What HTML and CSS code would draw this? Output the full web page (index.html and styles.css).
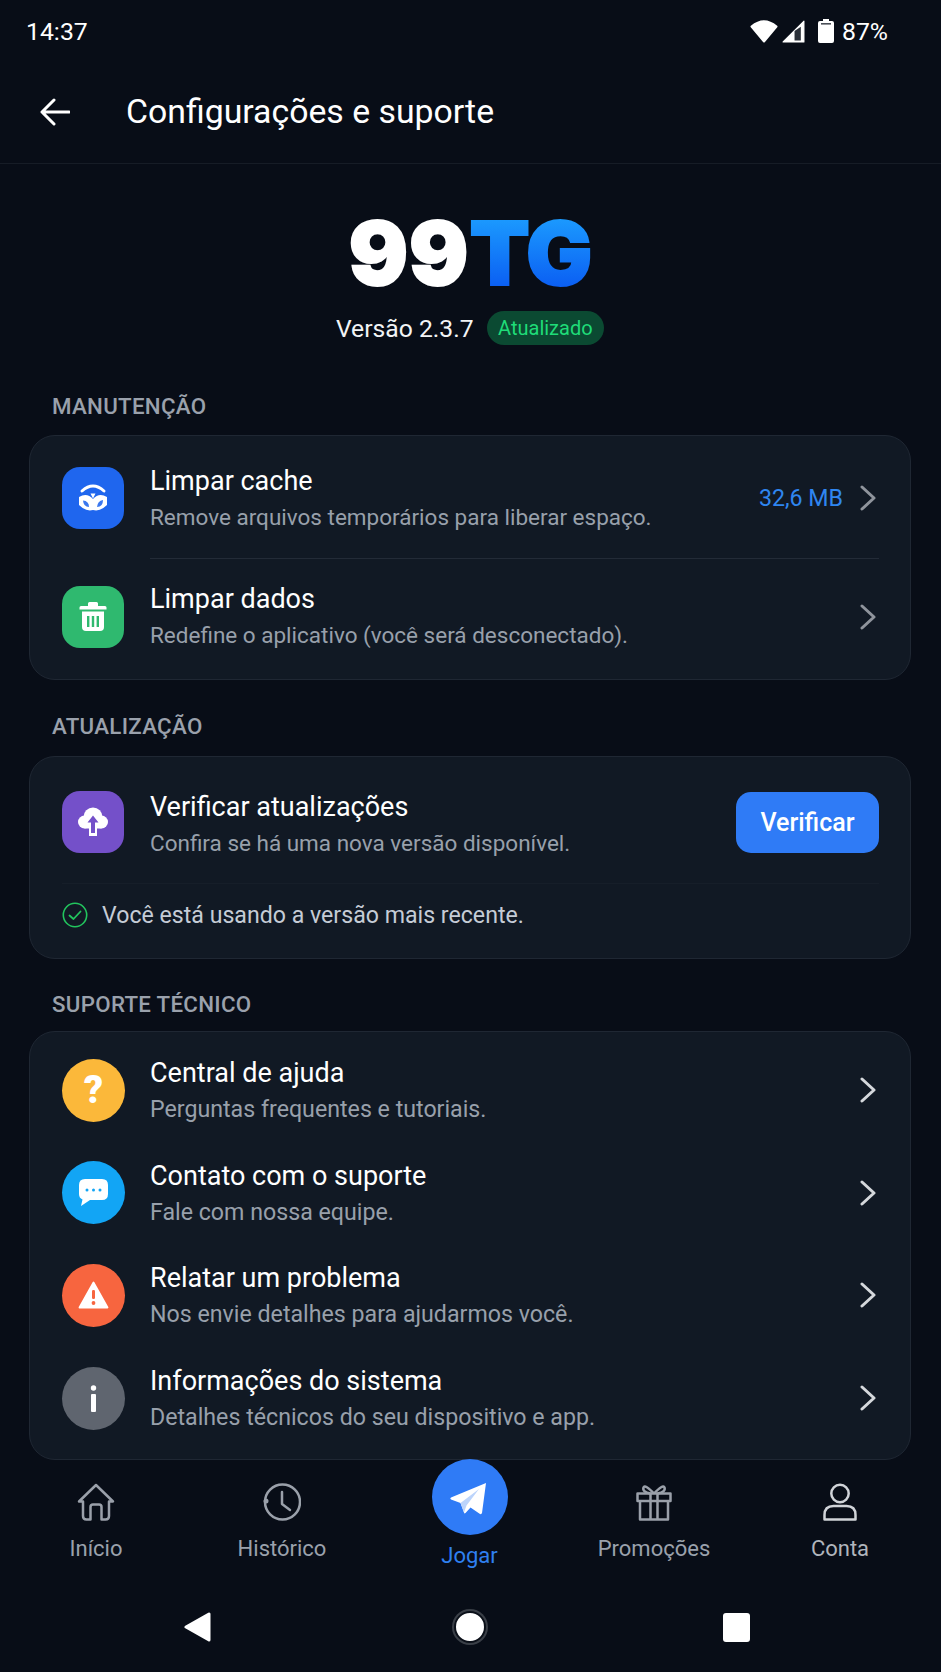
FILE: index.html
```html
<!DOCTYPE html>
<html lang="pt-BR">
<head>
<meta charset="utf-8">
<title>Configurações e suporte</title>
<link rel="stylesheet" href="styles.css">
</head>
<body>
<div class="screen">
  <div class="status">
    <span>14:37</span>
    <div class="status-right">
      <svg class="s-wifi" viewBox="0 0 28 24"><path d="M1.500 7.500Q14-3 26.500 7.500L14 22.500Z" fill="#fff" stroke="#fff" stroke-width="2" stroke-linejoin="round"/></svg>
      <svg class="s-signal" viewBox="0 0 22 22"><path d="M21 1V21H1Z" fill="#fff" stroke="#fff" stroke-linejoin="round"/><path d="M12 19.500V10.500L18 6.500V19.500Z" fill="#2a2f38"/></svg>
      <svg class="s-batt" viewBox="0 0 16 24"><path d="M5 0H11V2H14Q16 2 16 4V22Q16 24 14 24H2Q0 24 0 22V4Q0 2 2 2H5Z" fill="#fff"/><rect x="3" y="4" width="10" height="1.600" fill="#4a4f57"/></svg>
      <span>87%</span>
    </div>
  </div>

  <header class="topbar">
    <svg class="back" viewBox="0 0 30 28"><path d="M29 14H2M14 2 2 14 14 26" fill="none" stroke="#fff" stroke-width="3" stroke-linecap="round" stroke-linejoin="round"/></svg>
    <h1>Configurações e suporte</h1>
  </header>

  <main class="content">
    <div class="brand">
      <div class="logo"><span class="logo-w">99</span><span class="logo-b">TG</span></div>
      <div class="version"><span>Versão 2.3.7</span><span class="badge">Atualizado</span></div>
    </div>

    <h2 class="section section-m">MANUTENÇÃO</h2>
    <section class="card card-a">
      <div class="row row-first">
        <div class="ico sq blue">
          <svg viewBox="0 0 62 62"><path d="M20 24Q31 14 42 24" fill="none" stroke="#fff" stroke-width="3" stroke-linecap="round"/><path d="M17 30Q25 25 31 32Q37 25 45 30V38Q38 45 31 43Q24 45 17 38Z" fill="#fff"/><path d="M28.500 26.500H33.500L31 31.500Z" fill="#fff"/><path d="M21 33.500Q27 34 27 40Q21.500 40 21 33.500ZM41 33Q35.500 34 35 40Q41 40 41 33Z" fill="#3b78ef"/></svg>
        </div>
        <div class="text"><div class="t">Limpar cache</div><div class="d">Remove arquivos temporários para liberar espaço.</div></div>
        <span class="size">32,6 MB</span>
        <svg class="chev" viewBox="0 0 16 26"><path d="M2 2 14 13 2 24" fill="none" stroke="#8f949c" stroke-width="3" stroke-linecap="round" stroke-linejoin="round"/></svg>
      </div>
      <div class="rule"></div>
      <div class="row row-second">
        <div class="ico sq green">
          <svg viewBox="0 0 62 62"><path d="M26 20V17.500Q26 16 27.500 16H34.500Q36 16 36 17.500V20H43Q44.500 20 44.500 21.500V23.500H17.500V21.500Q17.500 20 19 20Z" fill="#fff"/><path d="M20 25.500H42V41Q42 45 38 45H24Q20 45 20 41Z" fill="#fff"/><path d="M25 30H27.400V41H25ZM29.800 30H32.200V41H29.800ZM34.600 30H37V41H34.600Z" fill="#2fb96f"/></svg>
        </div>
        <div class="text"><div class="t">Limpar dados</div><div class="d">Redefine o aplicativo (você será desconectado).</div></div>
        <svg class="chev" viewBox="0 0 16 26"><path d="M2 2 14 13 2 24" fill="none" stroke="#8f949c" stroke-width="3" stroke-linecap="round" stroke-linejoin="round"/></svg>
      </div>
    </section>

    <h2 class="section section-a">ATUALIZAÇÃO</h2>
    <section class="card card-b">
      <div class="row row-update">
        <div class="ico sq purple">
          <svg viewBox="0 0 62 62"><circle cx="31" cy="26" r="9.500" fill="#fff"/><circle cx="22.500" cy="31" r="6.500" fill="#fff"/><circle cx="39.500" cy="31" r="6.500" fill="#fff"/><rect x="22.500" y="28" width="17" height="9.500" fill="#fff"/><rect x="27" y="36" width="8" height="9" fill="#fff"/><path d="M31 24.500 36.500 31.500H33V42H29V31.500H25.500Z" fill="#7450c9"/></svg>
        </div>
        <div class="text"><div class="t">Verificar atualizações</div><div class="d">Confira se há uma nova versão disponível.</div></div>
        <button class="btn">Verificar</button>
      </div>
      <div class="latest">
        <svg class="ok" viewBox="0 0 26 26"><circle cx="13" cy="13" r="11.700" fill="none" stroke="#22c55e" stroke-width="1.600"/><path d="M7.500 13.500 11.500 17 18.500 9.500" fill="none" stroke="#22c55e" stroke-width="1.800" stroke-linecap="round" stroke-linejoin="round"/></svg>
        <span>Você está usando a versão mais recente.</span>
      </div>
    </section>

    <h2 class="section section-s">SUPORTE TÉCNICO</h2>
    <section class="card card-c">
      <div class="row row-sup">
        <div class="ico rd yellow"><span class="q">?</span></div>
        <div class="text"><div class="t">Central de ajuda</div><div class="d">Perguntas frequentes e tutoriais.</div></div>
        <svg class="chev" viewBox="0 0 16 26"><path d="M2 2 14 13 2 24" fill="none" stroke="#d5d8dc" stroke-width="3" stroke-linecap="round" stroke-linejoin="round"/></svg>
      </div>
      <div class="row row-sup">
        <div class="ico rd sky">
          <svg viewBox="0 0 63 63"><path d="M23 18H40Q46 18 46 24V33Q46 39 40 39H28L19 45 20.500 38.500Q17 37 17 33V24Q17 18 23 18Z" fill="#fff"/><circle cx="25" cy="29" r="1.500" fill="#12a5f5"/><circle cx="31.500" cy="29" r="1.500" fill="#12a5f5"/><circle cx="38" cy="29" r="1.500" fill="#12a5f5"/></svg>
        </div>
        <div class="text"><div class="t">Contato com o suporte</div><div class="d">Fale com nossa equipe.</div></div>
        <svg class="chev" viewBox="0 0 16 26"><path d="M2 2 14 13 2 24" fill="none" stroke="#d5d8dc" stroke-width="3" stroke-linecap="round" stroke-linejoin="round"/></svg>
      </div>
      <div class="row row-sup">
        <div class="ico rd orange">
          <svg viewBox="0 0 63 63"><path d="M31.500 18.500 45.500 43.500H17.500Z" fill="#fff" stroke="#fff" stroke-width="1.800" stroke-linejoin="round"/><rect x="30" y="26" width="3" height="9" rx="1.200" fill="#f7653f"/><circle cx="31.500" cy="39" r="1.900" fill="#f7653f"/></svg>
        </div>
        <div class="text"><div class="t">Relatar um problema</div><div class="d">Nos envie detalhes para ajudarmos você.</div></div>
        <svg class="chev" viewBox="0 0 16 26"><path d="M2 2 14 13 2 24" fill="none" stroke="#d5d8dc" stroke-width="3" stroke-linecap="round" stroke-linejoin="round"/></svg>
      </div>
      <div class="row row-sup">
        <div class="ico rd grey">
          <svg viewBox="0 0 63 63"><circle cx="31.500" cy="21" r="2.700" fill="#fff"/><rect x="29" y="27" width="5" height="18" rx="1" fill="#fff"/></svg>
        </div>
        <div class="text"><div class="t">Informações do sistema</div><div class="d">Detalhes técnicos do seu dispositivo e app.</div></div>
        <svg class="chev" viewBox="0 0 16 26"><path d="M2 2 14 13 2 24" fill="none" stroke="#d5d8dc" stroke-width="3" stroke-linecap="round" stroke-linejoin="round"/></svg>
      </div>
    </section>
  </main>

  <nav class="tabs">
    <div class="tab">
      <svg class="tab-ico" viewBox="0 0 38 38"><path d="M2 18.500 19 2 36 18.500H32V33Q32 36.500 28.500 36.500H24.500V24Q24.500 21.500 22 21.500H16Q13.500 21.500 13.500 24V36.500H9.500Q6 36.500 6 33V18.500Z" fill="none" stroke="#9aa0aa" stroke-width="2.500" stroke-linejoin="round"/></svg>
      <span>Início</span>
    </div>
    <div class="tab">
      <svg class="tab-ico" viewBox="0 0 38 38"><circle cx="19.500" cy="19" r="17.500" fill="none" stroke="#9aa0aa" stroke-width="2.500"/><path d="M19 9V21L27 27" fill="none" stroke="#9aa0aa" stroke-width="2.500" stroke-linecap="round" stroke-linejoin="round"/><circle cx="3" cy="18" r="2.500" fill="#9aa0aa"/></svg>
      <span>Histórico</span>
    </div>
    <div class="tab tab-on">
      <div class="fab">
        <svg viewBox="0 0 76 76"><path d="M54 24 19 38.500Q17.500 39.500 19 40.500L28.500 44 32 53.500Q32.500 55 33.500 54L38.500 48.500 48 55Q49.500 55.500 50 54Z" fill="#fff"/><path d="M28.500 44 47 30 34.500 46.500 32 53.500Z" fill="#bcd4fb"/></svg>
      </div>
      <span>Jogar</span>
    </div>
    <div class="tab">
      <svg class="tab-ico" viewBox="0 0 38 38"><path d="M2.500 10.500H35.500V18H2.500ZM5 18H33V36.500H5ZM15.500 10.500V36.500M22.500 10.500V36.500" fill="none" stroke="#9aa0aa" stroke-width="2.500" stroke-linejoin="round"/><path d="M19 10.500Q10 1 8.500 4.500 7 9 15.500 10.500M19 10.500Q28 1 29.500 4.500 31 9 22.500 10.500" fill="none" stroke="#9aa0aa" stroke-width="2.500"/></svg>
      <span>Promoções</span>
    </div>
    <div class="tab tab-lite">
      <svg class="tab-ico" viewBox="0 0 38 38"><circle cx="19" cy="10.500" r="8.700" fill="none" stroke="#d0d3d8" stroke-width="2.500"/><path d="M3.500 36.500V32Q3.500 23 12.500 23H25.500Q34.500 23 34.500 32V36.500Z" fill="none" stroke="#d0d3d8" stroke-width="2.500" stroke-linejoin="round"/></svg>
      <span>Conta</span>
    </div>
  </nav>

  <div class="sysnav">
    <svg class="sys-back" viewBox="0 0 27 30"><path d="M25 2V28L2 15Z" fill="#fff" stroke="#fff" stroke-width="3" stroke-linejoin="round"/></svg>
    <div class="sys-home"></div>
    <div class="sys-recent"></div>
  </div>
</div>
</body>
</html>
```

FILE: styles.css
```css
* { box-sizing: border-box; }
html, body { margin: 0; padding: 0; }
body { background: #080d17; font-family: Roboto, "Liberation Sans", sans-serif; color: #fff; }
.screen { width: 941px; height: 1672px; display: flex; flex-direction: column; overflow: hidden; }

.status { height: 60px; padding: 2px 53px 0 26px; display: flex; align-items: center; justify-content: space-between; font-size: 24.8px; }
.status-right { display: flex; align-items: center; }
.s-wifi { width: 28px; height: 24px; margin-right: 4px; }
.s-signal { width: 23px; height: 23px; margin-right: 13px; }
.s-batt { width: 16px; height: 24px; margin-right: 8px; }

.topbar { height: 104px; padding-left: 40px; display: flex; align-items: center; gap: 56px; border-bottom: 1px solid #161c26; }
.back { width: 30px; height: 28px; flex: none; }
.topbar h1 { margin: 0; font-size: 33.8px; font-weight: 400; }

.content { flex: none; height: 1297px; padding: 0 30px 0 29px; }
.brand { padding-top: 53px; display: flex; flex-direction: column; align-items: center; }
.logo { height: 70px; line-height: 72px; font-family: Inter, sans-serif; font-weight: 900; font-size: 88px; }
.logo-w { color: #fff; -webkit-text-stroke: 2px #fff; letter-spacing: 1px; }
.logo-b { background: linear-gradient(180deg, #1c9cff 15%, #0a5cf2 85%); -webkit-background-clip: text; background-clip: text; color: transparent; -webkit-text-stroke: 2px transparent; letter-spacing: -1px; }
.version { margin-top: 24px; height: 34px; display: flex; align-items: center; gap: 13px; font-size: 24.7px; color: #f2f4f6; }
.badge { height: 34px; padding: 0 11.5px; border-radius: 17px; background: #0b4a32; color: #1fdc78; font-size: 20px; line-height: 34px; }

.section { height: 24px; line-height: 23px; margin-left: 23px; font-size: 22.3px; font-weight: 500; color: #9aa1ac; letter-spacing: 0.3px; }
.section-m { margin-top: 50px; margin-bottom: 16px; }
.section-a { margin-top: 35px; margin-bottom: 17px; }
.section-s { margin-top: 34px; margin-bottom: 14px; }

.card { width: 882px; background: #111924; border: 1px solid #1f2733; border-radius: 26px; padding-left: 32px; padding-right: 31px; }
.card-a { height: 245px; }
.card-b { height: 203px; }
.card-c { height: 429px; padding-top: 7px; }

.row { display: flex; align-items: center; }
.row-first { height: 122px; padding-top: 2px; }
.row-second { height: 116px; }
.row-update { height: 127px; padding-top: 5px; padding-bottom: 1px; border-bottom: 1px solid #161e29; }
.row-sup { height: 102.6px; }

.rule { margin-left: 88px; height: 1px; background: #232b37; }

.ico { width: 62px; height: 62px; flex: none; display: flex; align-items: center; justify-content: center; }
.ico svg { width: 100%; height: 100%; display: block; }
.sq { border-radius: 18px; }
.rd { width: 63px; height: 63px; border-radius: 50%; }
.blue { background: #1f66ee; }
.green { background: #2fb96f; }
.purple { background: #7450c9; }
.yellow { background: #fbb83a; }
.sky { background: #12a5f5; }
.orange { background: #f7653f; }
.grey { background: #5f656f; }
.q { font-size: 38px; font-weight: 900; line-height: 1; color: #fff; }

.text { flex: 1; margin-left: 26px; min-width: 0; padding-top: 3px; }
.rd + .text { margin-left: 25px; }
.row-second .text { padding-top: 0; }
.row-update .text { padding-top: 7px; }
.t { font-size: 27px; font-weight: 400; line-height: 35px; color: #fff; }
.d { font-size: 22.5px; line-height: 36px; color: #98a0ab; }
.row-sup .d { font-size: 23.2px; }

.size { font-size: 23.2px; color: #2f86f0; margin-right: 17px; }
.chev { width: 16px; height: 26px; flex: none; margin-right: 3px; }

.btn { width: 143px; height: 61px; border: 0; border-radius: 15px; background: #2f7bf6; color: #fff; font-family: inherit; font-size: 25px; font-weight: 500; }

.latest { height: 73px; padding-bottom: 11px; display: flex; align-items: center; gap: 14px; font-size: 23.15px; color: #c5ccd6; }
.ok { width: 26px; height: 26px; flex: none; }

.tabs { height: 129px; padding-left: 3px; display: grid; grid-template-columns: repeat(5, 186px); font-size: 22px; color: #9aa1ac; }
.tab { display: flex; flex-direction: column; align-items: center; padding-top: 22px; }
.tab-ico { width: 38px; height: 38px; flex: none; }
.tab span { margin-top: 16px; line-height: 24px; }
.tab-on { padding-top: 0; padding-left: 3px; color: #2f80f0; }
.tab-on span { margin-top: 9px; }
.tab-lite { color: #b0b5bc; }
.fab { width: 76px; height: 76px; flex: none; margin-top: -2px; border-radius: 50%; background: #2f7bf6; }
.fab svg { display: block; width: 100%; height: 100%; }

.sysnav { flex: 1; padding: 0 0 8px 184px; display: flex; align-items: center; }
.sys-back { width: 27px; height: 30px; flex: none; }
.sys-home { width: 32px; height: 32px; margin-left: 243px; flex: none; border-radius: 50%; background: #fff; border: 2px solid #0b1019; box-shadow: 0 0 0 2px #3a3f47; }
.sys-recent { width: 27px; height: 29px; margin-left: 237px; flex: none; border-radius: 3px; background: #fff; }
```
